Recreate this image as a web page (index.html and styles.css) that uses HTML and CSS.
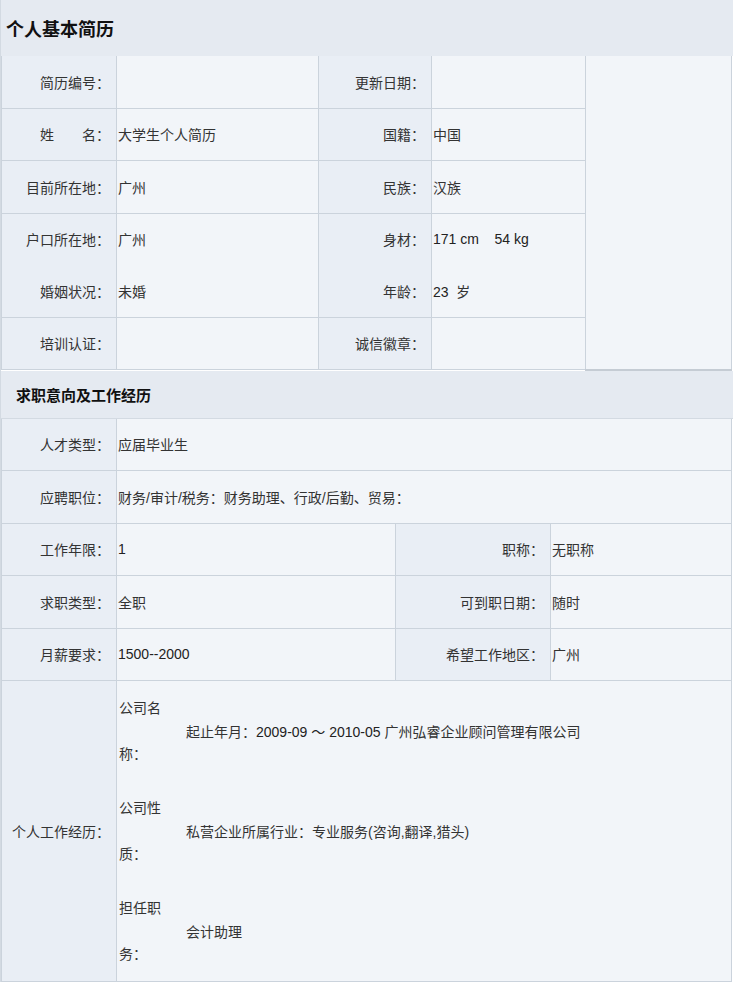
FILE: index.html
```html
<!DOCTYPE html>
<html lang="zh-CN">
<head>
    <meta charset="UTF-8">
    <title>个人基本简历</title>
    <link rel="stylesheet" href="styles.css">
</head>
<body>
    <div class="resume">
        <div class="page-title">个人基本简历</div>

        <table class="grid basic">
            <colgroup>
                <col class="c-label">
                <col style="width: 202px">
                <col style="width: 113px">
                <col style="width: 154px">
                <col>
            </colgroup>
            <tr>
                <td class="label">简历编号：</td>
                <td class="value"></td>
                <td class="label">更新日期：</td>
                <td class="value"></td>
                <td class="photo" rowspan="6"></td>
            </tr>
            <tr>
                <td class="label">姓　　名：</td>
                <td class="value">大学生个人简历</td>
                <td class="label">国籍：</td>
                <td class="value">中国</td>
            </tr>
            <tr>
                <td class="label">目前所在地：</td>
                <td class="value">广州</td>
                <td class="label">民族：</td>
                <td class="value">汉族</td>
            </tr>
            <tr class="joined">
                <td class="label">户口所在地：</td>
                <td class="value">广州</td>
                <td class="label">身材：</td>
                <td class="value num">171 cm&nbsp;&nbsp;&nbsp;&nbsp;54 kg</td>
            </tr>
            <tr>
                <td class="label">婚姻状况：</td>
                <td class="value">未婚</td>
                <td class="label">年龄：</td>
                <td class="value"><span class="num">23</span>&nbsp;&nbsp;岁</td>
            </tr>
            <tr>
                <td class="label">培训认证：</td>
                <td class="value"></td>
                <td class="label">诚信徽章：</td>
                <td class="value"></td>
            </tr>
        </table>

        <div class="section-title">求职意向及工作经历</div>

        <table class="grid intent">
            <colgroup>
                <col class="c-label">
                <col style="width: 279px">
                <col style="width: 155px">
                <col>
            </colgroup>
            <tr>
                <td class="label">人才类型：</td>
                <td class="value" colspan="3">应届毕业生</td>
            </tr>
            <tr>
                <td class="label">应聘职位：</td>
                <td class="value" colspan="3">财务/审计/税务：财务助理、行政/后勤、贸易：</td>
            </tr>
            <tr>
                <td class="label">工作年限：</td>
                <td class="value num">1</td>
                <td class="label">职称：</td>
                <td class="value">无职称</td>
            </tr>
            <tr>
                <td class="label">求职类型：</td>
                <td class="value">全职</td>
                <td class="label">可到职日期：</td>
                <td class="value">随时</td>
            </tr>
            <tr>
                <td class="label">月薪要求：</td>
                <td class="value num">1500--2000</td>
                <td class="label">希望工作地区：</td>
                <td class="value">广州</td>
            </tr>
            <tr class="tall">
                <td class="label">个人工作经历：</td>
                <td class="value" colspan="3">
                    <div class="job">
                        <div class="job-key">公司名称：</div>
                        <div class="job-val">起止年月：<span class="num">2009-09 ～ 2010-05</span>&nbsp;广州弘睿企业顾问管理有限公司</div>
                        <div class="job-key">公司性质：</div>
                        <div class="job-val">私营企业所属行业：专业服务(咨询,翻译,猎头)</div>
                        <div class="job-key">担任职务：</div>
                        <div class="job-val">会计助理</div>
                    </div>
                </td>
            </tr>
        </table>
    </div>
</body>
</html>
```

FILE: styles.css
```css
body {
    margin: 0;
    background: #ffffff;
    color: #333333;
    font-family: "Liberation Sans", "Noto Sans CJK SC", sans-serif;
    font-size: 14px;
}

.resume {
    width: 732px;
    border-left: 1px solid #d3dae2;
}

.page-title {
    height: 56px;
    display: flex;
    align-items: center;
    padding-left: 5px;
    background: #e5eaf1;
    font-size: 18px;
    font-weight: bold;
    color: #111111;
}

.section-title {
    height: 47px;
    display: flex;
    align-items: center;
    padding-left: 15px;
    background: #e5eaf1;
    font-size: 15px;
    font-weight: bold;
    color: #111111;
    border-bottom: 1px solid #d3dae2;
}

.grid {
    width: 731px;
    table-layout: fixed;
    border-collapse: collapse;
}

.grid .c-label {
    width: 115px;
}

.grid td {
    height: 51.5px;
    padding: 0;
    border: 1px solid #cbd3dc;
    vertical-align: middle;
    white-space: nowrap;
}

.grid tr:first-child td {
    border-top: none;
}

.label {
    background: #e9eef5;
    text-align: right;
    padding-right: 6px !important;
}

.value {
    background: #f2f5f9;
    padding-left: 1px !important;
    color: #333333;
}

.num {
    color: #222222;
}

.joined td {
    border-bottom: none;
}

.joined + tr td {
    border-top: none;
}

.photo {
    background: #f2f5f9;
    border-bottom: 2px solid #c5ccd4 !important;
}

.intent .tall td {
    height: 300px;
}

.job {
    display: grid;
    grid-template-columns: 52px 1fr;
    column-gap: 16px;
}

.job-key {
    height: 100px;
    display: flex;
    align-items: center;
    white-space: normal;
    line-height: 46px;
    padding-left: 1px;
}

.job-val {
    display: flex;
    align-items: center;
}
```
